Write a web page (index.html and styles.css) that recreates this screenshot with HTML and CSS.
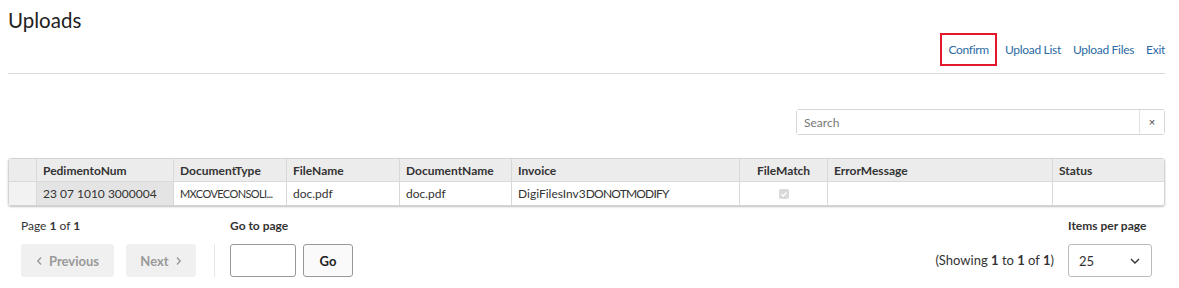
FILE: index.html
```html
<!DOCTYPE html>
<html lang="en">
<head>
    <meta charset="UTF-8">
    <title>Uploads</title>
    <link rel="stylesheet" href="styles.css">
</head>
<body>
    <div class="page">
        <!-- title and actions -->
        <div class="header">
            <h1 class="title">Uploads</h1>
            <div class="actions">
                <a href="#" class="action selected">Confirm</a>
                <a href="#" class="action">Upload List</a>
                <a href="#" class="action">Upload Files</a>
                <a href="#" class="action">Exit</a>
            </div>
        </div>

        <!-- search -->
        <div class="search-row">
            <div class="search">
                <input type="text" placeholder="Search">
                <button class="clear">&times;</button>
            </div>
        </div>

        <!-- grid -->
        <div class="grid">
            <div class="grid-row head">
                <div class="cell lead"></div>
                <div class="cell c1">PedimentoNum</div>
                <div class="cell c2">DocumentType</div>
                <div class="cell c3">FileName</div>
                <div class="cell c4">DocumentName</div>
                <div class="cell c5">Invoice</div>
                <div class="cell c6 center">FileMatch</div>
                <div class="cell c7">ErrorMessage</div>
                <div class="cell c8">Status</div>
            </div>
            <div class="grid-row">
                <div class="cell lead"></div>
                <div class="cell c1 frozen">23 07 1010 3000004</div>
                <div class="cell c2"><span class="short">MXCOVECONSOLI...</span></div>
                <div class="cell c3">doc.pdf</div>
                <div class="cell c4">doc.pdf</div>
                <div class="cell c5">DigiFilesInv3<span class="caps">DONOTMODIFY</span></div>
                <div class="cell c6 center">
                    <svg width="10" height="10" viewBox="0 0 10 10"><rect width="10" height="10" rx="2" fill="#d9d9d9"/><path d="M2.5 5.2l1.8 1.8 3.3-3.6" fill="none" stroke="#fff" stroke-width="1.3"/></svg>
                </div>
                <div class="cell c7"></div>
                <div class="cell c8"></div>
            </div>
        </div>

        <!-- paging -->
        <div class="pager">
            <div class="pager-group">
                <div class="label">Page <b>1</b> of <b>1</b></div>
                <div class="buttons">
                    <button class="nav-btn">
                        <svg width="7" height="10" viewBox="0 0 7 10"><path d="M5 1.5L1.8 5 5 8.5" fill="none" stroke="#999" stroke-width="1.4"/></svg>
                        Previous
                    </button>
                    <button class="nav-btn next">
                        Next
                        <svg width="7" height="10" viewBox="0 0 7 10"><path d="M2 1.5L5.2 5 2 8.5" fill="none" stroke="#999" stroke-width="1.4"/></svg>
                    </button>
                </div>
            </div>
            <div class="divider"></div>
            <div class="pager-group">
                <div class="label strong">Go to page</div>
                <div class="buttons">
                    <input type="text" class="page-input">
                    <button class="go-btn">Go</button>
                </div>
            </div>
            <div class="spacer"></div>
            <div class="showing">(Showing <b>1</b> to <b>1</b> of <b>1</b>)</div>
            <div class="pager-group">
                <div class="label strong">Items per page</div>
                <div class="select">
                    <span>25</span>
                    <svg width="12" height="8" viewBox="0 0 12 8"><path d="M2 2l4 4 4-4" fill="none" stroke="#333" stroke-width="1.4"/></svg>
                </div>
            </div>
        </div>
    </div>
</body>
</html>
```

FILE: styles.css
```css
body {
    margin: 0;
    font-family: Lato, "Noto Sans", sans-serif;
    font-size: 12px;
    color: #333;
    background: #fff;
}
.page {
    padding: 0 14px 0 8px;
}
.header {
    display: flex;
    justify-content: space-between;
    align-items: flex-start;
    border-bottom: 1px solid #d9d9d9;
    height: 73px;
}
.title {
    margin: 8px 0 0 0;
    font-size: 20.5px;
    font-weight: normal;
    color: #222;
}
.actions {
    display: flex;
    align-items: center;
    gap: 8px;
    margin-top: 33px;
    margin-right: -2px;
}
.action {
    color: #2b6aa3;
    text-decoration: none;
    letter-spacing: -0.3px;
    border: 2px solid transparent;
    padding: 7px 0;
}
.action.selected {
    border-color: #e3182d;
    padding: 7px 6px;
    margin-right: -2px;
}
.search-row {
    display: flex;
    justify-content: flex-end;
    margin-top: 35px;
}
.search {
    display: flex;
    width: 369px;
    height: 26px;
    box-sizing: border-box;
    border: 1px solid #d6d6d6;
    border-radius: 3px;
}
.search input {
    flex: 1;
    border: none;
    outline: none;
    padding: 0 7px;
    font-family: inherit;
    font-size: 12px;
    color: #333;
}
.search input::placeholder {
    color: #777;
}
.clear {
    width: 25px;
    border: none;
    border-left: 1px solid #e2e2e2;
    background: #fff;
    font-size: 11px;
    color: #444;
    padding: 0;
}
.grid {
    margin-top: 23px;
    border: 1px solid #d4d4d4;
    border-radius: 3px;
    box-shadow: 0 1px 2px rgba(0, 0, 0, 0.25);
    overflow: hidden;
}
.grid-row {
    display: flex;
    height: 23px;
}
.grid-row.head {
    height: 22px;
    background: #ececec;
    font-weight: bold;
    border-bottom: 1px solid #dadada;
}
.cell {
    display: flex;
    align-items: center;
    padding: 0 6px;
    border-left: 1px solid #d8d8d8;
    white-space: nowrap;
    overflow: hidden;
    box-sizing: border-box;
}
.caps {
    letter-spacing: -0.8px;
}
.short {
    font-size: 11px;
    letter-spacing: -0.6px;
}
.cell.lead {
    border-left: none;
    width: 27px;
    background: #f2f2f2;
}
.head .cell.lead {
    background: #ececec;
}
.c1 { width: 137px; }
.c2 { width: 113px; }
.c3 { width: 113px; }
.c4 { width: 112px; }
.c5 { width: 228px; }
.c6 { width: 88px; }
.c7 { width: 225px; }
.c8 { flex: 1; }
.center {
    justify-content: center;
}
.frozen {
    background: #e4e4e4;
}
.pager {
    display: flex;
    align-items: flex-end;
    padding: 12px 13px 0 13px;
}
.pager-group {
    display: flex;
    flex-direction: column;
}
.label {
    height: 26px;
    font-size: 12px;
}
.label.strong {
    font-weight: bold;
}
.buttons {
    display: flex;
    gap: 12px;
}
.nav-btn {
    display: flex;
    align-items: center;
    justify-content: center;
    gap: 6px;
    height: 33px;
    width: 93px;
    border: none;
    border-radius: 3px;
    background: #f0f0f0;
    color: #999;
    font-family: inherit;
    font-size: 13px;
    font-weight: bold;
}
.nav-btn.next {
    width: 70px;
}
.divider {
    width: 1px;
    height: 33px;
    background: #e8e8e8;
    margin: 0 15px 0 18px;
}
.buttons .page-input {
    width: 66px;
    height: 33px;
    box-sizing: border-box;
    border: 1px solid #999;
    border-radius: 3px;
    margin-right: -5px;
}
.go-btn {
    width: 50px;
    height: 33px;
    border: 1px solid #999;
    border-radius: 3px;
    background: #fafafa;
    font-family: inherit;
    font-size: 13px;
    font-weight: bold;
    color: #222;
}
.spacer {
    flex: 1;
}
.showing {
    font-size: 13px;
    height: 33px;
    line-height: 33px;
    margin-right: 14px;
}
.select {
    display: flex;
    justify-content: space-between;
    align-items: center;
    width: 84px;
    height: 33px;
    box-sizing: border-box;
    border: 1px solid #bbb;
    border-radius: 3px;
    padding: 0 10px;
    font-size: 13px;
}
```
